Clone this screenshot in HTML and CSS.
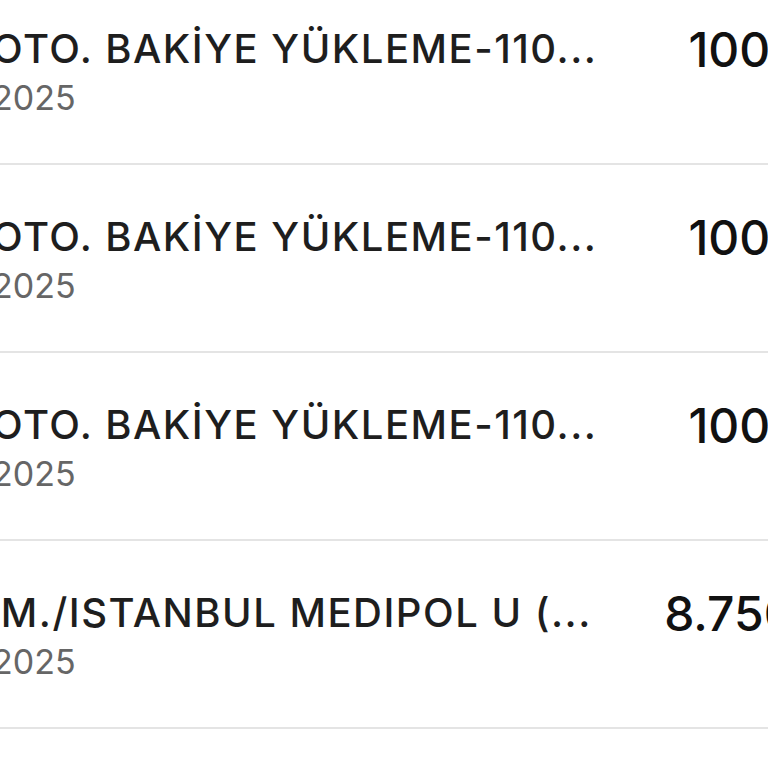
FILE: index.html
```html
<!DOCTYPE html>
<html lang="tr">
<head>
<meta charset="utf-8">
<link rel="stylesheet" href="styles.css">
</head>
<body>
<div class="list">
  <div class="row">
    <div class="info">
      <div class="title">OTO. BAKİYE YÜKLEME-110...</div>
      <div class="date">2025</div>
    </div>
    <div class="amount">100,00 TL</div>
  </div>
  <div class="row">
    <div class="info">
      <div class="title">OTO. BAKİYE YÜKLEME-110...</div>
      <div class="date">2025</div>
    </div>
    <div class="amount">100,00 TL</div>
  </div>
  <div class="row">
    <div class="info">
      <div class="title">OTO. BAKİYE YÜKLEME-110...</div>
      <div class="date">2025</div>
    </div>
    <div class="amount">100,00 TL</div>
  </div>
  <div class="row">
    <div class="info">
      <div class="title title-long">AM./ISTANBUL MEDIPOL U (...</div>
      <div class="date">2025</div>
    </div>
    <div class="amount">8.750,00 TL</div>
  </div>
</div>
</body>
</html>
```
FILE: styles.css
```css
html, body {
  margin: 0;
  padding: 0;
  background: #ffffff;
  overflow: hidden;
}
body {
  width: 768px;
  height: 768px;
  font-family: Inter, "Noto Sans", sans-serif;
}
.list {
  width: 950px;
  margin-left: -8px;
  margin-top: -23px;
}
.row {
  height: 186px;
  border-bottom: 2px solid #e4e4e4;
  display: flex;
  align-items: flex-start;
}
.info {
  flex: 1;
  min-width: 0;
  padding-top: 48px;
}
.title {
  font-size: 40px;
  line-height: 48px;
  font-weight: 500;
  letter-spacing: 1.5px;
  color: #1e1e1e;
  white-space: nowrap;
}
.title-long {
  margin-left: -21px;
}
.date {
  margin-top: 5px;
  font-size: 34px;
  line-height: 40px;
  font-weight: 400;
  color: #666666;
}
.amount {
  flex: none;
  width: 280px;
  padding-top: 45px;
  font-size: 48px;
  line-height: 56px;
  font-weight: 500;
  color: #111111;
  white-space: nowrap;
  text-align: center;
}
```
